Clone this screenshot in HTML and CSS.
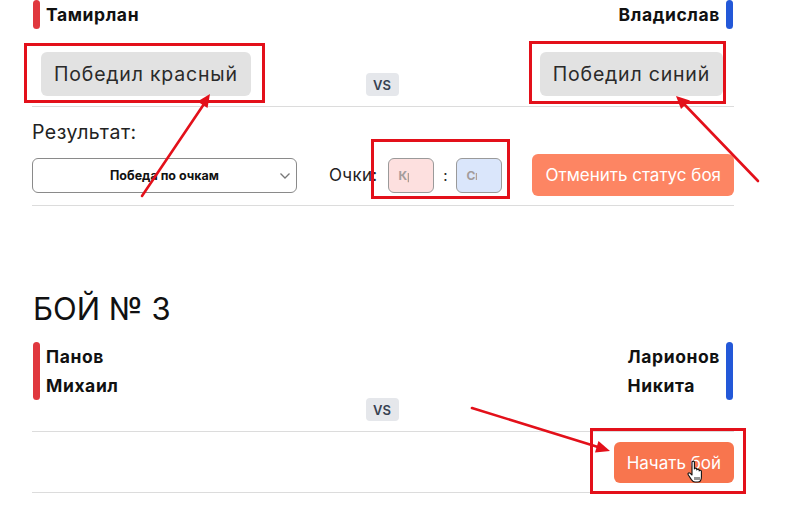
FILE: index.html
```html
<!DOCTYPE html>
<html lang="ru">
<head>
<meta charset="utf-8">
<title>Бои</title>
<link rel="stylesheet" href="styles.css">
</head>
<body>
<div class="page">
  <section class="fight">
    <div class="fighters">
      <div class="fighter red">
        <span class="bar"></span>
        <div class="names">Тамирлан</div>
      </div>
      <div class="fighter blue">
        <div class="names">Владислав</div>
        <span class="bar"></span>
      </div>
    </div>
    <div class="actions">
      <button class="win-btn win-red">Победил красный</button>
      <span class="vs">VS</span>
      <button class="win-btn win-blue">Победил синий</button>
    </div>
    <div class="result">
      <div class="result-label">Результат:</div>
      <div class="result-row">
        <div class="select-wrap">
          <select class="select">
            <option>Победа по очкам</option>
          </select>
          <svg class="chevron" width="12" height="8" viewBox="0 0 12 8"><path d="M1.5 1.5 L6 6 L10.5 1.5" fill="none" stroke="#777" stroke-width="1.3"/></svg>
        </div>
        <span class="points-label">Очки:</span>
        <input class="score score-red" type="text" placeholder="Красный">
        <span class="colon">:</span>
        <input class="score score-blue" type="text" placeholder="Синий">
        <button class="cancel-btn">Отменить статус боя</button>
      </div>
    </div>
  </section>

  <section class="fight fight-next">
    <h2 class="fight-title">БОЙ № 3</h2>
    <div class="fighters">
      <div class="fighter red">
        <span class="bar"></span>
        <div class="names">Панов<br>Михаил</div>
      </div>
      <div class="fighter blue">
        <div class="names">Ларионов<br>Никита</div>
        <span class="bar"></span>
      </div>
    </div>
    <div class="actions">
      <span class="spacer"></span>
      <span class="vs">VS</span>
      <span class="spacer"></span>
    </div>
    <div class="start-row">
      <button class="start-btn">Начать бой</button>
    </div>
  </section>
</div>

<svg class="annotations" width="788" height="527" viewBox="0 0 788 527">
  <g fill="none" stroke="#e3101a" stroke-width="3">
    <rect x="25.5" y="44.5" width="238" height="57"/>
    <rect x="530.5" y="42.5" width="194" height="60"/>
    <rect x="372.5" y="140.5" width="136" height="57"/>
    <rect x="591.5" y="429.5" width="153" height="63"/>
  </g>
  <g stroke="#e3101a" stroke-width="2.6" stroke-linecap="round">
    <line x1="142" y1="196" x2="204" y2="104"/>
    <line x1="758" y1="181" x2="684" y2="104"/>
    <line x1="472" y1="408" x2="598" y2="447"/>
  </g>
  <g fill="#e3101a">
    <polygon points="210,94 207.5,108 197.5,101.5"/>
    <polygon points="676,96 690,100.5 681,109"/>
    <polygon points="610,451 595,452.5 598.5,441"/>
  </g>
  <g transform="translate(687,460)">
    <path d="M5 2.2 C5 0.8 7.4 0.8 7.4 2.2 L7.4 9 C7.6 7.8 9.8 7.8 9.8 9.2 L9.8 10 C10 8.8 12.2 8.8 12.2 10.2 L12.2 11 C12.4 9.9 14.4 9.9 14.4 11.2 L14.4 17 C14.4 20 12.8 22 10.8 22 L8 22 C6.4 22 5.4 21 4.4 19.6 L1.2 14.8 C0.4 13.6 1.8 12.2 3 13.2 L5 15 Z" fill="#fff" stroke="#111" stroke-width="1.1" stroke-linejoin="round"/>
    <path d="M8 17 L8 20 M10 17 L10 20 M12 17 L12 20" stroke="#111" stroke-width="0.9"/>
  </g>
</svg>
</body>
</html>
```

FILE: styles.css
```css
* {
  box-sizing: border-box;
}

html, body {
  margin: 0;
  padding: 0;
  background: #ffffff;
}

body {
  position: relative;
  width: 788px;
  height: 527px;
  overflow: hidden;
  font-family: Inter, "Liberation Sans", Arial, sans-serif;
  color: #111;
}

.page {
  width: 702px;
  margin-left: 32px;
}

.fighters {
  display: flex;
  justify-content: space-between;
  align-items: flex-start;
}

.fighter {
  display: flex;
  gap: 6px;
}

.fighter.red {
  margin-left: 1px;
}

.fighter.blue {
  margin-right: 1px;
}

.bar {
  width: 7px;
  border-radius: 4px;
}

.red .bar {
  background: #e0383e;
}

.blue .bar {
  background: #2358d8;
}

.names {
  font-size: 17.5px;
  font-weight: 700;
  letter-spacing: 0.6px;
  line-height: 29px;
  color: #111;
}

.actions {
  display: grid;
  grid-template-columns: 1fr auto 1fr;
  align-items: end;
  margin-top: -2px;
  padding: 0 11px 10px 9px;
  border-bottom: 1px solid #dcdcdc;
}

.win-red {
  justify-self: start;
}

.win-blue {
  justify-self: end;
}

.win-btn {
  margin-top: 25px;
  height: 44px;
  padding: 0 13px;
  border: none;
  border-radius: 6px;
  background: #e2e2e2;
  color: #2a2a2a;
  font-family: inherit;
  font-size: 19.5px;
  letter-spacing: 0.8px;
}

.vs {
  display: inline-flex;
  align-items: center;
  justify-content: center;
  width: 33px;
  height: 23px;
  border-radius: 4px;
  background: #e5e7eb;
  color: #374151;
  font-size: 13px;
  font-weight: 600;
}

.result {
  border-bottom: 1px solid #dcdcdc;
  padding-bottom: 9px;
}

.result-label {
  margin-top: 14px;
  font-size: 19.5px;
  letter-spacing: 0.5px;
  line-height: 22px;
  color: #222;
}

.result-row {
  display: flex;
  align-items: center;
  margin-top: 11px;
}

.select-wrap {
  position: relative;
  width: 265px;
  height: 35px;
}

.select {
  width: 100%;
  height: 100%;
  appearance: none;
  -webkit-appearance: none;
  border: 1px solid #8a8a8a;
  border-radius: 6px;
  background: #fff;
  font-family: inherit;
  font-size: 12.5px;
  font-weight: 700;
  color: #111;
  text-align: center;
  text-align-last: center;
  padding: 0 20px;
}

.chevron {
  position: absolute;
  right: 6px;
  top: 14px;
}

.points-label {
  margin-left: 32px;
  font-size: 17px;
  letter-spacing: 0.3px;
  color: #222;
}

.score {
  width: 46px;
  height: 35px;
  margin-left: 11px;
  border: 1px solid #9a9a9a;
  border-radius: 6px;
  padding: 0 24px 0 9px;
  font-family: inherit;
  font-size: 12px;
  font-weight: 700;
  outline: none;
}

.score::placeholder {
  color: #a39c9c;
}

.score-red {
  background: #fde0df;
}

.score-blue {
  background: #dae6fb;
  margin-left: 0;
}

.colon {
  width: 22px;
  text-align: center;
  font-size: 15px;
  color: #222;
}

.cancel-btn {
  margin-left: auto;
  height: 42px;
  padding: 0 13px;
  border: none;
  border-radius: 6px;
  background: #fd8563;
  color: #fff;
  font-family: inherit;
  font-size: 17px;
}

.fight-title {
  margin: 85px 0 0 1px;
  font-size: 31px;
  font-weight: 400;
  line-height: 36px;
  color: #111;
}

.fight-next .fighters {
  margin-top: 15px;
}

.start-row {
  display: flex;
  justify-content: flex-end;
  padding: 10px 0 9px;
  border-bottom: 1px solid #dcdcdc;
}

.start-btn {
  height: 41px;
  padding: 0 13px;
  border: none;
  border-radius: 6px;
  background: #f8754e;
  color: #fff;
  font-family: inherit;
  font-size: 17px;
}

.annotations {
  position: absolute;
  left: 0;
  top: 0;
  pointer-events: none;
}
```
